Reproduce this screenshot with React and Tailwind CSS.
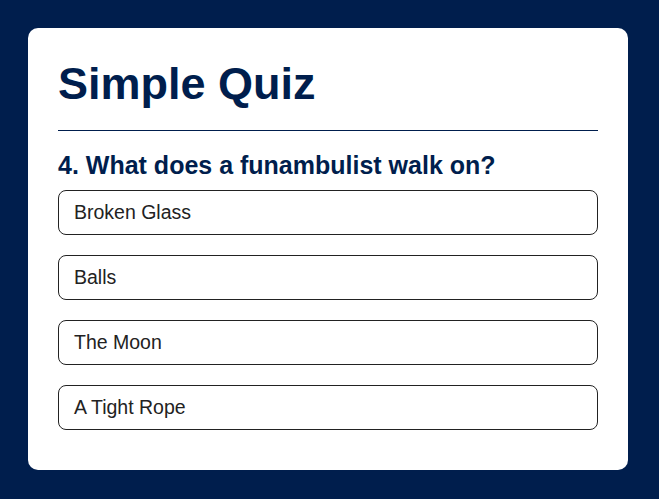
import React, { useState } from "react";

const question = {
  number: 4,
  text: "What does a funambulist walk on?",
  answers: ["Broken Glass", "Balls", "The Moon", "A Tight Rope"],
};

export default function App() {
  const [picked, setPicked] = useState(null);

  return (
    <div className="min-h-screen bg-[#001e4d] pt-[28px] pb-[30px] font-['Liberation_Sans',Arial,sans-serif]">
      <div className="ml-[28px] w-[600px] rounded-[10px] bg-white p-[30px]">
        <h1 className="border-b border-[#001e4d] pb-[20px] text-[45px] font-bold leading-[52px] text-[#001e4d]">
          Simple Quiz
        </h1>

        <div className="pt-[20px]">
          <h2 className="text-[25px] font-bold leading-[29px] text-[#001e4d]">
            {question.number}. {question.text}
          </h2>

          <div className="mt-[10px] mb-[10px] flex flex-col gap-[20px]">
            {question.answers.map((answer, i) => (
              <button
                key={answer}
                onClick={() => setPicked(i)}
                className={
                  "w-full rounded-[8px] border border-[#222] px-[15px] py-[10px] text-left text-[19.5px] leading-[23px] text-[#222] " +
                  (picked === i ? "bg-gray-100" : "bg-white")
                }
              >
                {answer}
              </button>
            ))}
          </div>
        </div>
      </div>
    </div>
  );
}
